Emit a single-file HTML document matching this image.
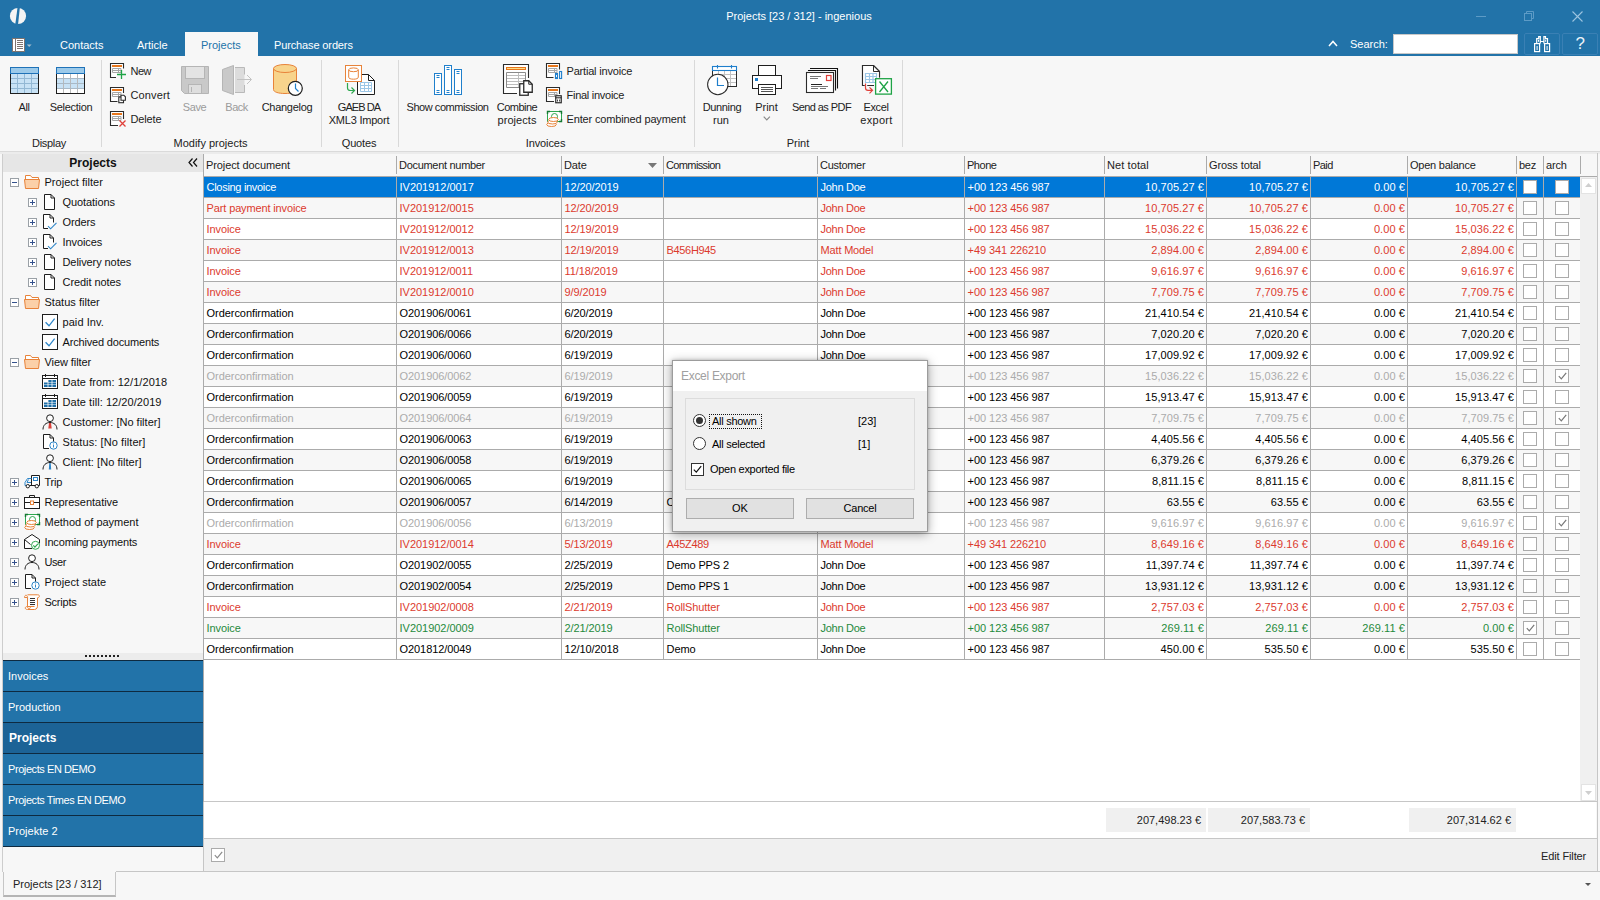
<!DOCTYPE html>
<html><head><meta charset="utf-8"><title>Projects [23 / 312] - ingenious</title>
<style>
*{box-sizing:border-box}
html,body{margin:0;padding:0}
body{width:1600px;height:900px;overflow:hidden;background:#f7f7f7;font-family:"Liberation Sans",sans-serif;font-size:11px;color:#1a1a1a;position:relative;-webkit-font-smoothing:antialiased}
.abs{position:absolute}
.t{position:absolute;white-space:nowrap;line-height:13px;height:13px}
.w{color:#fff}
.c{text-align:center}
svg{position:absolute;overflow:visible}
/* grid */
#grid{position:absolute;left:203px;top:154px;width:1394px;height:648px;background:#fff}
.row{position:absolute;left:1px;width:1376px;height:21px;border-bottom:1px solid #ABABAB}
.row.alt{background:#f7f7f7}
.row.sel{background:#0078D7;color:#fff}
.row.red{color:#DC3A2E}.row.grn{color:#1F8A3C}.row.gry{color:#ABABAB}.row.blk{color:#000}
.cell{position:absolute;top:0;height:20px;line-height:20px;white-space:nowrap;overflow:hidden;padding:0 3px 0 2.6px;letter-spacing:-0.12px}
.cell.r{text-align:right;padding-right:2px;letter-spacing:0.08px}
.vl{position:absolute;width:1px;background:#ABABAB}
.cb{position:absolute;width:14px;height:14px;border:1px solid #ABABAB;background:#fff;top:3px}
.hd{position:absolute;top:0;height:22px;line-height:22px;color:#222;white-space:nowrap;padding-left:2px;letter-spacing:-0.1px}
.sum{position:absolute;top:654px;height:24px;background:#f0f0f0;line-height:24px;text-align:right;padding-right:5px;color:#222}
/* sidebar */
.nav{position:absolute;left:3px;width:200px;height:31px;background:#2273A9;border-top:1px solid #0e2a40;color:#fff;line-height:31px;padding-left:5px}
.tr{position:absolute;white-space:nowrap;line-height:14px;height:14px;color:#111}
.pm{position:absolute;width:9px;height:9px;border:1px solid #9aa0a6;background:#fff}
.pm:before{content:"";position:absolute;left:1px;top:3px;width:5px;height:1px;background:#34518c}
.pm.plus:after{content:"";position:absolute;left:3px;top:1px;width:1px;height:5px;background:#34518c}
/* ribbon */
.rl{position:absolute;white-space:nowrap;line-height:13px;color:#222;font-size:11px}
.rsep{position:absolute;top:60px;height:87px;width:1px;background:#d9d9d9}
.dis{color:#9b9b9b}
</style></head><body>

<div class="abs" style="left:0;top:0;width:1600px;height:56px;background:#2273A9"></div>
<svg style="left:9px;top:7px" width="18" height="18" viewBox="0 0 18 18"><circle cx="9" cy="9" r="8.1" fill="#f4f4f4"/><path d="M8.600 0L10.900 0L9.000 18L6.200 18Z" fill="#2273A9"/></svg>
<div class="t w" style="left:650px;width:298px;text-align:center;top:10px">Projects [23 / 312] - ingenious</div>
<div class="abs" style="left:1476px;top:16px;width:10px;height:1px;background:#5d9bc6"></div>
<svg style="left:1524px;top:11px" width="10" height="10" viewBox="0 0 10 10" fill="none" stroke="#5d9bc6" stroke-width="1"><rect x="0.5" y="2.5" width="7" height="7"/><path d="M2.5 2.5V0.5H9.5V7.5H7.5"/></svg>
<svg style="left:1572px;top:11px" width="11" height="11" viewBox="0 0 11 11" fill="none" stroke="#9cc4e0" stroke-width="1.1"><path d="M0.5 0.5L10.5 10.5M10.5 0.5L0.5 10.5"/></svg>
<svg style="left:12px;top:38px" width="20" height="14" viewBox="0 0 20 14"><rect x="0.5" y="0.5" width="12" height="13" fill="#fff" stroke="#7d7470" stroke-width="1"/><path d="M3.500 1v12" stroke="#7d7470"/><path d="M5 2.500h6M5 4.500h6M5 6.500h6M5 8.500h6M5 10.500h6" stroke="#7d7470" stroke-width="1"/><path d="M14.800 6.500h4.800l-2.400 2.600z" fill="#a9bfce"/></svg>
<div class="abs" style="left:185px;top:32px;width:73px;height:25px;background:#f7f7f7"></div>
<div class="t w" style="left:60px;top:39px">Contacts</div>
<div class="t w" style="left:137px;top:39px">Article</div>
<div class="t" style="left:201px;top:39px;color:#2273A9">Projects</div>
<div class="t w" style="left:274px;top:39px;letter-spacing:-0.13px">Purchase orders</div>
<svg style="left:1328px;top:40px" width="10" height="7" viewBox="0 0 10 7" fill="none" stroke="#fff" stroke-width="1.5"><path d="M1 6L5 1.5L9 6"/></svg>
<div class="t w" style="left:1350px;top:38px">Search:</div>
<div class="abs" style="left:1393px;top:34px;width:125px;height:20px;background:#fff;border:1px solid #c8c8c8"></div>
<div class="abs" style="left:1524px;top:33px;width:36px;height:22px;border:1px solid #3a80b4;border-radius:2px"></div>
<div class="abs" style="left:1562px;top:33px;width:36px;height:22px;border:1px solid #3a80b4;border-radius:2px"></div>
<svg style="left:1534px;top:36px" width="17" height="16" viewBox="0 0 17 16" fill="none" stroke="#fff" stroke-width="1.2"><rect x="0.600" y="7.600" width="5" height="8"/><rect x="10.600" y="7.600" width="5" height="8"/><path d="M2.700 7.600V2.600H4.700V0.600H6.300V7.600M13.500 7.600V2.600H11.500V0.600H9.900V7.600M6.300 5.500h3.600"/><path d="M3.100 10v4M13.100 10v4M4.500 3.800v2M11.700 3.800v2" stroke-width="1"/></svg>
<div class="t" style="left:1575.5px;top:35px;font-size:17px;line-height:18px;height:18px;color:#eaf2f8">?</div>
<div class="abs" style="left:0;top:56px;width:1600px;height:95px;background:#f7f7f7"></div>
<div class="abs" style="left:0;top:151px;width:1600px;height:1px;background:#dadada"></div>
<div class="abs" style="left:0;top:152px;width:1600px;height:2px;background:#ececec"></div>
<div class="rsep" style="left:101px"></div>
<div class="rsep" style="left:321px"></div>
<div class="rsep" style="left:398px"></div>
<div class="rsep" style="left:694px"></div>
<div class="rsep" style="left:902px"></div>
<svg style="left:10px;top:67px" width="29" height="27" viewBox="0 0 29 27" fill="none" stroke-width="1"><rect x="0.5" y="6.5" width="28" height="20" fill="#C8E2F5" stroke="none"/><path d="M7.5 7v19.5M14.5 7v19.5M21.5 7v19.5" stroke="#93B8D4"/><path d="M1 11.5h27M1 16.5h27M1 21.5h27" stroke="#93B8D4"/><rect x="0.5" y="0.5" width="28" height="26" stroke="#1e1e1e"/><rect x="0.5" y="0.5" width="28" height="6" fill="#9CCAEA" stroke="#1F72B8"/></svg>
<svg style="left:56px;top:67px" width="29" height="27" viewBox="0 0 29 27" fill="none" stroke-width="1"><rect x="0.5" y="6.5" width="28" height="20" fill="#fff" stroke="none"/><rect x="1" y="11.5" width="27" height="10" fill="#C8E2F5"/><path d="M7.5 7v19.5M14.5 7v19.5M21.5 7v19.5" stroke="#b9b9b9"/><path d="M1 11.5h27M1 16.5h27M1 21.5h27" stroke="#a9b9c6"/><rect x="0.5" y="0.5" width="28" height="26" stroke="#1e1e1e"/><rect x="0.5" y="0.5" width="28" height="6" fill="#9CCAEA" stroke="#1F72B8"/></svg>
<div class="rl " style="left:-36px;width:120px;text-align:center;top:101px;letter-spacing:-0.411px">All</div>
<div class="rl " style="left:11px;width:120px;text-align:center;top:101px;letter-spacing:-0.285px">Selection</div>
<div class="rl " style="left:-11px;width:120px;text-align:center;top:137px;letter-spacing:-0.325px">Display</div>
<svg style="left:110px;top:63px" width="17" height="17" viewBox="0 0 17 17" fill="none" stroke-width="1"><path d="M13.5 5.5V0.5H0.5v14H6" fill="#fff" stroke="#2b2b2b" stroke-width="1.1"/><path d="M2 3h10" stroke="#E8771C" stroke-width="2"/><path d="M2.5 5.5h8.5v4h-8.5zM2.5 7.5h8.5M8.5 5.5v4" stroke="#a6a6a6"/><path d="M11.5 7v9M7 11.5h9" stroke="#1FA346" stroke-width="1.3"/></svg>
<svg style="left:110px;top:87px" width="17" height="17" viewBox="0 0 17 17" fill="none" stroke-width="1"><path d="M13.5 6V0.5H0.5v14H7.5" fill="#fff" stroke="#2b2b2b" stroke-width="1.1"/><path d="M2 3h10" stroke="#E8771C" stroke-width="2"/><path d="M2.5 5.5h8.5v4h-8.5zM2.5 7.5h8.5M8.5 5.5v4" stroke="#a6a6a6"/><rect x="8.800" y="10" width="4.700" height="5.700" fill="#fff" stroke="#2b2b2b" stroke-width="1.100"/><path d="M11 8.200h2.800l1.600 1.600v3.400h-4.400z" fill="#fff" stroke="#2b2b2b" stroke-width="1.100"/></svg>
<svg style="left:110px;top:111px" width="17" height="17" viewBox="0 0 17 17" fill="none" stroke-width="1"><path d="M13.5 8V0.5H0.5v14H8" fill="#fff" stroke="#2b2b2b" stroke-width="1.1"/><path d="M2 3h10" stroke="#E8771C" stroke-width="2"/><path d="M2.5 5.5h8.5v4h-8.5zM2.5 7.5h8.5M8.5 5.5v4" stroke="#a6a6a6"/><path d="M9.5 9.500l6 6M15.500 9.500l-6 6" stroke="#E0403A" stroke-width="1.3"/></svg>
<div class="rl " style="left:130.5px;top:65px;letter-spacing:-0.505px">New</div>
<div class="rl " style="left:130.5px;top:89px;letter-spacing:0.124px">Convert</div>
<div class="rl " style="left:130.5px;top:113px;letter-spacing:-0.149px">Delete</div>
<svg style="left:181px;top:66px" width="28" height="28" viewBox="0 0 28 28" fill="none" stroke-width="1"><path d="M0.5 0.5h27v27H3.5l-3-3z" fill="#c9c9c9" stroke="#b5b5b5"/><rect x="4.5" y="0.5" width="19" height="12" fill="#e3e3e3" stroke="#b5b5b5"/><rect x="7.5" y="18.5" width="13" height="9" fill="#dedede" stroke="#b5b5b5"/><path d="M10.5 21v5" stroke="#b5b5b5"/></svg>
<div class="rl dis" style="left:134.5px;width:120px;text-align:center;top:101px;letter-spacing:-0.42px">Save</div>
<svg style="left:222px;top:65px" width="31" height="30" viewBox="0 0 31 30" fill="none" stroke-width="1"><rect x="13" y="3" width="9.500" height="24.500" fill="#dcdcdc"/><path d="M13 2.500h9.500v7M22.500 20v7.500h-9.500" stroke="#b9b9b9"/><path d="M0.500 4.500L11.500 0.500v29L0.500 25.500z" fill="#c9c9c9" stroke="#b5b5b5"/><path d="M15 14.500h14M25 10l4.500 4.500l-4.500 4.500" stroke="#c2c2c2"/></svg>
<div class="rl dis" style="left:176.5px;width:120px;text-align:center;top:101px;letter-spacing:-0.542px">Back</div>
<svg style="left:273px;top:64px" width="32" height="32" viewBox="0 0 32 32" fill="none" stroke-width="1"><path d="M0.5 4.5v21c0 2.5 5 4 11.5 4s11.5-1.5 11.5-4v-21" fill="#F8D48C" stroke="#E8833A"/><ellipse cx="12" cy="4.5" rx="11.5" ry="4" fill="#F8D48C" stroke="#E8833A"/><circle cx="22.3" cy="24.3" r="7" fill="#fff" stroke="#1e1e1e" stroke-width="1.2"/><path d="M22.5 19.5v5l3 3" stroke="#2080CC" stroke-width="1.2"/></svg>
<div class="rl " style="left:227px;width:120px;text-align:center;top:101px;letter-spacing:-0.291px">Changelog</div>
<div class="rl " style="left:150.5px;width:120px;text-align:center;top:137px;letter-spacing:0.001px">Modify projects</div>
<svg style="left:345px;top:65px" width="31" height="31" viewBox="0 0 31 31" fill="none" stroke-width="1"><path d="M12.5 9.5h11l6 6v14h-17z" fill="#fff" stroke="#1e1e1e"/><path d="M23.5 9.5v6h6" stroke="#1e1e1e"/><path d="M15.500 17.500h11v9h-11zM15.500 20.500h11M15.500 23.500h11M19.500 17.500v9M23.500 17.500v9" stroke="#9CC6E6"/><rect x="0.5" y="0.500" width="16" height="16" fill="#fff" stroke="#E8833A"/><path d="M3.700 4.800v7.500c0 1.200 2.200 1.900 4.800 1.900s4.800-0.700 4.800-1.900V4.800" stroke="#E8833A"/><ellipse cx="8.500" cy="4.800" rx="4.800" ry="1.900" stroke="#E8833A"/><path d="M2.500 18v5c0 2 1 2.500 3 2.500h3.500M6.500 22.500l3 3l-3 3" stroke="#2EA84F" stroke-width="1.200"/></svg>
<div class="rl " style="left:299px;width:120px;text-align:center;top:101px;letter-spacing:-0.944px">GAEB DA</div>
<div class="rl " style="left:299px;width:120px;text-align:center;top:114px;letter-spacing:-0.224px">XML3 Import</div>
<div class="rl " style="left:299px;width:120px;text-align:center;top:137px;letter-spacing:-0.161px">Quotes</div>
<svg style="left:434px;top:65px" width="29" height="30" viewBox="0 0 29 30" fill="none" stroke-width="1"><rect x="0.5" y="8.5" width="7" height="21" fill="#fff" stroke="#2080CC"/><path d="M2.5 10.5h3M2.5 12.5h3M2.5 25.5h3M2.5 27.5h3" stroke="#2080CC"/><rect x="10.5" y="0.5" width="7" height="29" fill="#fff" stroke="#2080CC"/><path d="M12.5 2.5h3M12.5 4.5h3M12.5 25.5h3M12.5 27.5h3" stroke="#2080CC"/><rect x="20.5" y="4.5" width="7" height="25" fill="#fff" stroke="#2080CC"/><path d="M22.5 6.5h3M22.5 8.5h3M22.5 25.5h3M22.5 27.5h3" stroke="#2080CC"/></svg>
<div class="rl " style="left:387.5px;width:120px;text-align:center;top:101px;letter-spacing:-0.443px">Show commission</div>
<svg style="left:503px;top:64px" width="31" height="33" viewBox="0 0 31 33" fill="none" stroke-width="1"><path d="M25.500 14V0.500H0.500v29H14" fill="#fff" stroke="#2b2b2b" stroke-width="1.1"/><rect x="3.500" y="3.500" width="19" height="2" fill="#FBE08A" stroke="#E8751A"/><path d="M3.500 8.500h19v15h-19z" stroke="#8a8a8a"/><path d="M4 11.500h18M4 14.500h18M4 17.500h18M4 20.500h18M15.500 9v14" stroke="#bdbdbd"/><rect x="16.750" y="19.750" width="8.500" height="11.500" fill="#fff" stroke="#2b2b2b" stroke-width="1.300"/><path d="M20.750 16.750h5l3.500 3.500v8h-8.500z" fill="#fff" stroke="#2b2b2b" stroke-width="1.300"/><path d="M25.750 16.750v3.500h3.500" stroke="#2b2b2b"/></svg>
<div class="rl " style="left:457px;width:120px;text-align:center;top:101px;letter-spacing:-0.519px">Combine</div>
<div class="rl " style="left:457px;width:120px;text-align:center;top:114px;letter-spacing:0.046px">projects</div>
<svg style="left:546px;top:63px" width="17" height="17" viewBox="0 0 17 17" fill="none" stroke-width="1"><path d="M13.5 6.5V0.5H0.5v14H7.5" fill="#fff" stroke="#2b2b2b" stroke-width="1.1"/><path d="M2 3h10" stroke="#E8771C" stroke-width="2"/><path d="M2.5 5.5h8.5v4h-8.5zM2.5 7.5h8.5M8.5 5.5v4" stroke="#a6a6a6"/><rect x="9.500" y="10.500" width="2" height="5" fill="#fff" stroke="#1F7FCC" stroke-width="1.100"/><rect x="13.600" y="8.500" width="2" height="7" fill="#fff" stroke="#1F7FCC" stroke-width="1.100"/></svg>
<svg style="left:546px;top:87px" width="17" height="17" viewBox="0 0 17 17" fill="none" stroke-width="1"><path d="M13.5 7V0.5H0.5v14H8" fill="#fff" stroke="#2b2b2b" stroke-width="1.1"/><path d="M2 3h10" stroke="#E8771C" stroke-width="2"/><path d="M2.5 5.5h8.5v4h-8.5zM2.5 7.5h8.5M8.5 5.5v4" stroke="#a6a6a6"/><rect x="9.750" y="8.750" width="5.500" height="7" fill="#fff" stroke="#2b2b2b" stroke-width="1.200"/><path d="M9.500 10.800h6" stroke="#2b2b2b" stroke-width="1.100"/><path d="M11.500 12.500v2M13.600 12.500v2" stroke="#2b2b2b" stroke-width="0.9"/></svg>
<svg style="left:546px;top:111px" width="17" height="17" viewBox="0 0 17 17" fill="none" stroke-width="1"><rect x="1.5" y="0.5" width="14" height="10" fill="#fff" stroke="#2EA84F"/><path d="M1.500 3V0.500H4M13 0.500h2.500V3M15.500 8v2.500H13" stroke="#157a33" stroke-width="1.400"/><circle cx="8.500" cy="5.500" r="3" stroke="#2EA84F"/><ellipse cx="5.500" cy="13.500" rx="4.800" ry="2" fill="#fff" stroke="#E8833A"/><ellipse cx="6.500" cy="11" rx="4.800" ry="2" fill="#fff" stroke="#E8833A"/><ellipse cx="7.500" cy="8.500" rx="4.800" ry="2" fill="#fff" stroke="#E8833A"/></svg>
<div class="rl " style="left:566.5px;top:65px;letter-spacing:-0.186px">Partial invoice</div>
<div class="rl " style="left:566.5px;top:89px;letter-spacing:-0.265px">Final invoice</div>
<div class="rl " style="left:566.5px;top:113px;letter-spacing:-0.145px">Enter combined payment</div>
<div class="rl " style="left:485.5px;width:120px;text-align:center;top:137px;letter-spacing:-0.095px">Invoices</div>
<svg style="left:707px;top:65px" width="32" height="31" viewBox="0 0 32 31" fill="none" stroke-width="1"><rect x="5.500" y="1.500" width="24" height="20" fill="#fff" stroke="#2b2b2b"/><path d="M13 9.500h16M13 13.500h16M13 17.500h16M11.500 6v15M17.500 6v15M23.500 6v15" stroke="#c2c2c2"/><rect x="5.500" y="1.500" width="24" height="4" fill="#fff" stroke="#1F7FCC" stroke-width="1.100"/><path d="M10.500 0v3.500M24.500 0v3.500" stroke="#1F7FCC" stroke-width="1.100"/><circle cx="10.800" cy="19.500" r="10.200" fill="#fff" stroke="#2b2b2b" stroke-width="1.050"/><path d="M10.500 12.500v8h6.500" stroke="#1F7FCC" stroke-width="1.200"/></svg>
<div class="rl " style="left:662px;width:120px;text-align:center;top:101px;letter-spacing:-0.369px">Dunning</div>
<div class="rl " style="left:661px;width:120px;text-align:center;top:114px;letter-spacing:0.065px">run</div>
<svg style="left:752px;top:65px" width="31" height="31" viewBox="0 0 31 31" fill="none" stroke-width="1"><rect x="6.500" y="0.500" width="17" height="11" fill="#fff" stroke="#1e1e1e"/><rect x="0.500" y="10.500" width="29" height="13" fill="#fff" stroke="#1e1e1e"/><rect x="3" y="13" width="3" height="3" fill="#1F7FCC"/><rect x="6.500" y="19.500" width="17" height="10" fill="#fff" stroke="#1e1e1e"/><path d="M9 22.500h12M9 24.500h12M9 26.500h12" stroke="#555"/></svg>
<div class="rl " style="left:706.5px;width:120px;text-align:center;top:101px;letter-spacing:-0.065px">Print</div>
<svg style="left:763px;top:116px" width="8" height="5" viewBox="0 0 8 5" fill="none" stroke-width="1"><path d="M0.700 0.700l3.100 3.100l3.100-3.100" stroke="#8a8a8a" stroke-width="1.200"/></svg>
<svg style="left:806px;top:67px" width="33" height="27" viewBox="0 0 33 27" fill="none" stroke-width="1"><path d="M4 1.500H31.500V21.500" stroke="#111" stroke-width="1.100"/><path d="M2 3.500H29.500V23.500" stroke="#111" stroke-width="1.100"/><rect x="0.500" y="5.500" width="27" height="20" fill="#fff" stroke="#2b2b2b" stroke-width="1.100"/><rect x="20.500" y="8.500" width="4.500" height="5" stroke="#E0403A" stroke-width="1.200"/><path d="M4 9.500h11M4 11.500h8" stroke="#777"/><path d="M5 17.500h11" stroke="#222"/><path d="M5 19.500h17M5 21.500h7M14 21.500h6" stroke="#777"/></svg>
<div class="rl " style="left:761.5px;width:120px;text-align:center;top:101px;letter-spacing:-0.566px">Send as PDF</div>
<svg style="left:862px;top:65px" width="31" height="31" viewBox="0 0 31 31" fill="none" stroke-width="1"><path d="M2.500 20.500H0.500V0.500H11.500L17.500 6.500V12.500M5.500 20.500H12" fill="none" stroke="#2b2b2b" stroke-width="1.100"/><path d="M0.500 20V0.500H11.500L17.500 6.500V20z" fill="#fff" stroke="none"/><path d="M2.500 20.500H0.500V0.500H11.500L17.500 6.500V12.500M5.500 20.500H12" stroke="#2b2b2b" stroke-width="1.100"/><path d="M11.500 0.500V6.500H17.500" stroke="#2b2b2b"/><path d="M3.500 8.500h11v9h-11zM3.500 11.500h11M3.500 14.500h11M7.500 8.500v9M11 8.500v9" stroke="#9CC6E6" stroke-width="1.200"/><rect x="13.600" y="13.700" width="15.800" height="15.400" fill="#fff" stroke="#1FA346" stroke-width="1.300"/><path d="M17.500 16.500L26 27M26 16.500L17.500 27" stroke="#1FA346" stroke-width="1.300"/><path d="M3.500 18.500v4.500c0 1.600 0.800 2.300 2.500 2.300h4.500M7.500 22.300l3 3l-3 3" stroke="#E0403A" stroke-width="1.200"/></svg>
<div class="rl " style="left:816px;width:120px;text-align:center;top:101px;letter-spacing:-0.341px">Excel</div>
<div class="rl " style="left:816.5px;width:120px;text-align:center;top:114px;letter-spacing:0.304px">export</div>
<div class="rl " style="left:738px;width:120px;text-align:center;top:137px;letter-spacing:-0.065px">Print</div>
<div class="abs" style="left:0;top:154px;width:203px;height:718px;background:#f7f7f7"></div>
<div class="abs" style="left:2px;top:154px;width:1px;height:718px;background:#cdcdcd"></div>
<div class="abs" style="left:3px;top:154px;width:200px;height:18px;background:#e6e6e6"></div>
<div class="t" style="left:3px;width:180px;text-align:center;top:157px;font-weight:bold;font-size:12px;color:#111">Projects</div>
<svg style="left:188px;top:158px" width="10" height="9" viewBox="0 0 10 9" fill="none" stroke="#111" stroke-width="1.2"><path d="M4.5 0.5L1 4.5L4.5 8.5M9 0.5L5.5 4.5L9 8.5"/></svg>
<div class="pm" style="left:10px;top:178px"></div>
<svg style="left:24px;top:174px" width="16" height="16" viewBox="0 0 16 16" fill="none" stroke-width="1"><path d="M1.5 6V1.5h5l1.5 2h6.5V6" fill="#fff" stroke="#E8833A"/><path d="M0.5 5.5h15l-1 9h-13z" fill="#FBD0A8" stroke="#E8833A"/></svg>
<div class="tr" style="left:44.5px;top:175px;letter-spacing:0.023px">Project filter</div>
<div class="pm plus" style="left:28px;top:198px"></div>
<svg style="left:42px;top:194px" width="16" height="16" viewBox="0 0 16 16" fill="none" stroke-width="1"><path d="M2.5 0.5h6.5l3.5 3.5v11.5h-10z" fill="#fff" stroke="#1e1e1e"/><path d="M9 0.5v3.5h3.5" stroke="#1e1e1e"/></svg>
<div class="tr" style="left:62.5px;top:195px;letter-spacing:-0.07px">Quotations</div>
<div class="pm plus" style="left:28px;top:218px"></div>
<svg style="left:42px;top:214px" width="16" height="16" viewBox="0 0 16 16" fill="none" stroke-width="1"><path d="M6 14.5H1.5v-14h6.5l3.5 3.5v4.5" fill="#fff" stroke="#1e1e1e"/><path d="M8 0.5v3.5h3.5" stroke="#1e1e1e"/><path d="M6 12.2l2.6 2.6L14.5 8.8" stroke="#2E86C9" stroke-width="1.1"/></svg>
<div class="tr" style="left:62.5px;top:215px;letter-spacing:-0.138px">Orders</div>
<div class="pm plus" style="left:28px;top:238px"></div>
<svg style="left:42px;top:234px" width="16" height="16" viewBox="0 0 16 16" fill="none" stroke-width="1"><path d="M6 14.5H1.5v-14h6.5l3.5 3.5v4.5" fill="#fff" stroke="#1e1e1e"/><path d="M8 0.5v3.5h3.5" stroke="#1e1e1e"/><path d="M6 12.2l2.6 2.6L14.5 8.8" stroke="#2E86C9" stroke-width="1.1"/></svg>
<div class="tr" style="left:62.5px;top:235px;letter-spacing:-0.095px">Invoices</div>
<div class="pm plus" style="left:28px;top:258px"></div>
<svg style="left:42px;top:254px" width="16" height="16" viewBox="0 0 16 16" fill="none" stroke-width="1"><path d="M2.5 0.5h6.5l3.5 3.5v11.5h-10z" fill="#fff" stroke="#1e1e1e"/><path d="M9 0.5v3.5h3.5" stroke="#1e1e1e"/></svg>
<div class="tr" style="left:62.5px;top:255px;letter-spacing:-0.079px">Delivery notes</div>
<div class="pm plus" style="left:28px;top:278px"></div>
<svg style="left:42px;top:274px" width="16" height="16" viewBox="0 0 16 16" fill="none" stroke-width="1"><path d="M2.5 0.5h6.5l3.5 3.5v11.5h-10z" fill="#fff" stroke="#1e1e1e"/><path d="M9 0.5v3.5h3.5" stroke="#1e1e1e"/></svg>
<div class="tr" style="left:62.5px;top:275px;letter-spacing:-0.068px">Credit notes</div>
<div class="pm" style="left:10px;top:298px"></div>
<svg style="left:24px;top:294px" width="16" height="16" viewBox="0 0 16 16" fill="none" stroke-width="1"><path d="M1.5 6V1.5h5l1.5 2h6.5V6" fill="#fff" stroke="#E8833A"/><path d="M0.5 5.5h15l-1 9h-13z" fill="#FBD0A8" stroke="#E8833A"/></svg>
<div class="tr" style="left:44.5px;top:295px;letter-spacing:0.021px">Status filter</div>
<svg style="left:42px;top:314px" width="16" height="16" viewBox="0 0 16 16" fill="none" stroke-width="1"><rect x="0.5" y="0.5" width="15" height="15" fill="#fff" stroke="#1e1e1e"/><path d="M3.6 8.2l3.4 3.6L12.6 4.6" stroke="#2E86C9" stroke-width="1.3"/></svg>
<div class="tr" style="left:62.5px;top:315px;letter-spacing:0.069px">paid Inv.</div>
<svg style="left:42px;top:334px" width="16" height="16" viewBox="0 0 16 16" fill="none" stroke-width="1"><rect x="0.5" y="0.5" width="15" height="15" fill="#fff" stroke="#1e1e1e"/><path d="M3.6 8.2l3.4 3.6L12.6 4.6" stroke="#2E86C9" stroke-width="1.3"/></svg>
<div class="tr" style="left:62.5px;top:335px;letter-spacing:-0.165px">Archived documents</div>
<div class="pm" style="left:10px;top:358px"></div>
<svg style="left:24px;top:354px" width="16" height="16" viewBox="0 0 16 16" fill="none" stroke-width="1"><path d="M1.5 6V1.5h5l1.5 2h6.5V6" fill="#fff" stroke="#E8833A"/><path d="M0.5 5.5h15l-1 9h-13z" fill="#FBD0A8" stroke="#E8833A"/></svg>
<div class="tr" style="left:44.5px;top:355px;letter-spacing:-0.08px">View filter</div>
<svg style="left:42px;top:374px" width="16" height="16" viewBox="0 0 16 16" fill="none" stroke-width="1"><rect x="0.5" y="1.5" width="15" height="13" fill="#fff" stroke="#1e1e1e"/><path d="M0.5 4.5h15M3.5 0v3M12.5 0v3" stroke="#1e1e1e"/><path d="M6 6h8v2h-8zM2 8.5h12v2h-12zM2 11h12v2h-12z" fill="#1F6FA8"/><path d="M6 6v7M10 6v7" stroke="#fff" stroke-width="0.8"/></svg>
<div class="tr" style="left:62.5px;top:375px;letter-spacing:0.068px">Date from: 12/1/2018</div>
<svg style="left:42px;top:394px" width="16" height="16" viewBox="0 0 16 16" fill="none" stroke-width="1"><rect x="0.5" y="1.5" width="15" height="13" fill="#fff" stroke="#1e1e1e"/><path d="M0.5 4.5h15M3.5 0v3M12.5 0v3" stroke="#1e1e1e"/><path d="M6 6h8v2h-8zM2 8.5h12v2h-12zM2 11h12v2h-12z" fill="#1F6FA8"/><path d="M6 6v7M10 6v7" stroke="#fff" stroke-width="0.8"/></svg>
<div class="tr" style="left:62.5px;top:395px;letter-spacing:0.054px">Date till: 12/20/2019</div>
<svg style="left:42px;top:414px" width="16" height="16" viewBox="0 0 16 16" fill="none" stroke-width="1"><circle cx="8" cy="4.2" r="3.4" fill="#fff" stroke="#1e1e1e"/><path d="M1 15.5c0-4.5 3-7 7-7s7 2.5 7 7" stroke="#1e1e1e"/><path d="M7 9h2l0.7 5.5h-3.4z" fill="#D9433B"/></svg>
<div class="tr" style="left:62.5px;top:415px;letter-spacing:0.009px">Customer: [No filter]</div>
<svg style="left:42px;top:434px" width="16" height="16" viewBox="0 0 16 16" fill="none" stroke-width="1"><path d="M7 14.5H1.5v-14h6.5l3.5 3.5v4" fill="#fff" stroke="#1e1e1e"/><path d="M8 0.5v3.5h3.5" stroke="#1e1e1e"/><circle cx="11.5" cy="11.5" r="3.7" fill="#fff" stroke="#2E86C9"/><path d="M11.5 10.5v3" stroke="#2E86C9"/><circle cx="11.5" cy="9" r="0.6" fill="#2E86C9"/></svg>
<div class="tr" style="left:62.5px;top:435px;letter-spacing:0.089px">Status: [No filter]</div>
<svg style="left:42px;top:454px" width="16" height="16" viewBox="0 0 16 16" fill="none" stroke-width="1"><circle cx="8" cy="4.2" r="3.4" fill="#fff" stroke="#1e1e1e"/><path d="M1 15.5c0-4.5 3-7 7-7s7 2.5 7 7" stroke="#1e1e1e"/><path d="M7.3 9h1.4l0.5 6.5h-2.4z" fill="#2E86C9"/></svg>
<div class="tr" style="left:62.5px;top:455px;letter-spacing:0.039px">Client: [No filter]</div>
<div class="pm plus" style="left:10px;top:478px"></div>
<svg style="left:24px;top:474px" width="16" height="16" viewBox="0 0 16 16" fill="none" stroke-width="1"><path d="M7.5 11.5V1.5h8v10h-1.5" fill="#fff" stroke="#1e1e1e"/><rect x="9.5" y="3.5" width="4" height="3" stroke="#2E86C9"/><path d="M5.5 11.500h6" stroke="#1e1e1e"/><path d="M7.500 4.500h-4l-2.500 4v3h1.500" stroke="#2E86C9"/><path d="M4.500 5.500l-1.500 3h4" stroke="#2E86C9"/><circle cx="3.8" cy="12.2" r="1.7" fill="#fff" stroke="#1e1e1e"/><circle cx="12.8" cy="12.2" r="1.7" fill="#fff" stroke="#1e1e1e"/></svg>
<div class="tr" style="left:44.5px;top:475px;letter-spacing:-0.212px">Trip</div>
<div class="pm plus" style="left:10px;top:498px"></div>
<svg style="left:24px;top:494px" width="16" height="16" viewBox="0 0 16 16" fill="none" stroke-width="1"><rect x="0.5" y="3.5" width="15" height="11" fill="#fff" stroke="#1e1e1e"/><path d="M5.5 3.5v-2h5v2" stroke="#1e1e1e"/><path d="M0.5 8.5h15" stroke="#1e1e1e"/><rect x="6.5" y="7" width="3" height="3.5" fill="#fff" stroke="#E8833A"/></svg>
<div class="tr" style="left:44.5px;top:495px;letter-spacing:-0.021px">Representative</div>
<div class="pm plus" style="left:10px;top:518px"></div>
<svg style="left:24px;top:514px" width="16" height="16" viewBox="0 0 16 16" fill="none" stroke-width="1"><rect x="1.5" y="0.5" width="14" height="10" fill="#fff" stroke="#2EA84F"/><path d="M1.5 3V0.5H4M13 0.5h2.5V3M15.5 8v2.5H13" stroke="#157a33" stroke-width="1.4"/><circle cx="8.5" cy="5.5" r="3" stroke="#2EA84F"/><ellipse cx="5.5" cy="13.5" rx="4.8" ry="2" fill="#fff" stroke="#E8833A"/><ellipse cx="6.5" cy="11" rx="4.8" ry="2" fill="#fff" stroke="#E8833A"/><ellipse cx="7.5" cy="8.5" rx="4.8" ry="2" fill="#fff" stroke="#E8833A"/></svg>
<div class="tr" style="left:44.5px;top:515px;letter-spacing:-0.01px">Method of payment</div>
<div class="pm plus" style="left:10px;top:538px"></div>
<svg style="left:24px;top:534px" width="16" height="16" viewBox="0 0 16 16" fill="none" stroke-width="1"><path d="M0.5 14.5v-9L8 0.5l7.5 5v4" stroke="#1e1e1e" fill="#fff"/><path d="M0.5 14.5H8M0.5 5.5l6 5" stroke="#1e1e1e"/><circle cx="11.5" cy="11.3" r="4" fill="#fff" stroke="#2EA84F"/><path d="M9.3 11.4l1.6 1.7l3-3.3" stroke="#2EA84F" stroke-width="1.2"/></svg>
<div class="tr" style="left:44.5px;top:535px;letter-spacing:-0.158px">Incoming payments</div>
<div class="pm plus" style="left:10px;top:558px"></div>
<svg style="left:24px;top:554px" width="16" height="16" viewBox="0 0 16 16" fill="none" stroke-width="1"><circle cx="8" cy="4.2" r="3.4" fill="#fff" stroke="#1e1e1e"/><path d="M1 15.5c0-4.5 3-7 7-7s7 2.5 7 7" stroke="#1e1e1e"/></svg>
<div class="tr" style="left:44.5px;top:555px;letter-spacing:-0.459px">User</div>
<div class="pm plus" style="left:10px;top:578px"></div>
<svg style="left:24px;top:574px" width="16" height="16" viewBox="0 0 16 16" fill="none" stroke-width="1"><path d="M7 14.5H1.5v-14h6.5l3.5 3.5v4" fill="#fff" stroke="#1e1e1e"/><path d="M8 0.5v3.5h3.5" stroke="#1e1e1e"/><circle cx="11.5" cy="11.5" r="3.7" fill="#fff" stroke="#2E86C9"/><path d="M11.5 10.5v3" stroke="#2E86C9"/><circle cx="11.5" cy="9" r="0.6" fill="#2E86C9"/></svg>
<div class="tr" style="left:44.5px;top:575px;letter-spacing:0.043px">Project state</div>
<div class="pm plus" style="left:10px;top:598px"></div>
<svg style="left:24px;top:594px" width="16" height="16" viewBox="0 0 16 16" fill="none" stroke-width="1"><path d="M3.5 3.5c0-3 -3-3-3 0h3v9c0 3 3 3 3 0M3.5 0.8h10c3 0 2 3 0 3v8.5c0 3-3 3.2-3 3.2h-7c-3 0-3-3 0-3h7" fill="#fff" stroke="#E8833A"/><path d="M6 4.5h5M6 6.5h5M6 8.5h5M6 10.5h5" stroke="#333"/></svg>
<div class="tr" style="left:44.5px;top:595px;letter-spacing:-0.232px">Scripts</div>
<div class="abs" style="left:3px;top:653px;width:200px;height:7px;background:#ececec"></div>
<div class="abs" style="left:85px;top:655px;width:34px;height:2px;background:repeating-linear-gradient(90deg,#222 0 2px,transparent 2px 4px)"></div>
<div class="nav" style="top:660px">Invoices</div>
<div class="nav" style="top:691px">Production</div>
<div class="nav" style="top:722px;background:#1C6396;font-weight:bold;font-size:12px;padding-left:6px">Projects</div>
<div class="nav" style="top:753px;letter-spacing:-0.42px">Projects EN DEMO</div>
<div class="nav" style="top:784px;letter-spacing:-0.42px">Projects Times EN DEMO</div>
<div class="nav" style="top:815px">Projekte 2</div>
<div class="abs" style="left:3px;top:846px;width:200px;height:1px;background:#0e2a40"></div>
<div id="grid">
<div class="abs" style="left:0;top:0;width:1394px;height:22px;background:#f7f7f7"></div>
<div class="abs" style="left:0;top:22px;width:1394px;height:1px;background:#ABABAB"></div>
<div class="hd" style="left:1px;letter-spacing:-0.101px">Project document</div>
<div class="hd" style="left:194px;letter-spacing:-0.3px">Document number</div>
<div class="hd" style="left:359px;letter-spacing:-0.162px">Date</div>
<div class="hd" style="left:461px;letter-spacing:-0.622px">Commission</div>
<div class="hd" style="left:615px;letter-spacing:-0.298px">Customer</div>
<div class="hd" style="left:762px;letter-spacing:-0.463px">Phone</div>
<div class="hd" style="left:902px;letter-spacing:0.103px">Net total</div>
<div class="hd" style="left:1004px;letter-spacing:-0.117px">Gross total</div>
<div class="hd" style="left:1108px;letter-spacing:-0.583px">Paid</div>
<div class="hd" style="left:1205px;letter-spacing:-0.242px">Open balance</div>
<div class="hd" style="left:1314px;letter-spacing:-0.283px">bez</div>
<div class="hd" style="left:1341px;letter-spacing:-0.202px">arch</div>
<div class="vl" style="left:193px;top:2px;height:18px"></div>
<div class="vl" style="left:358px;top:2px;height:18px"></div>
<div class="vl" style="left:460px;top:2px;height:18px"></div>
<div class="vl" style="left:614px;top:2px;height:18px"></div>
<div class="vl" style="left:761px;top:2px;height:18px"></div>
<div class="vl" style="left:901px;top:2px;height:18px"></div>
<div class="vl" style="left:1003px;top:2px;height:18px"></div>
<div class="vl" style="left:1107px;top:2px;height:18px"></div>
<div class="vl" style="left:1204px;top:2px;height:18px"></div>
<div class="vl" style="left:1313px;top:2px;height:18px"></div>
<div class="vl" style="left:1340px;top:2px;height:18px"></div>
<div class="vl" style="left:1377px;top:2px;height:18px"></div>
<svg style="left:445px;top:9px" width="9" height="5" viewBox="0 0 9 5"><path d="M0 0h9L4.5 5z" fill="#777"/></svg>
<div class="row sel" style="top:23px">
<div class="cell" style="left:0px;width:192px;letter-spacing:-0.306px">Closing invoice</div>
<div class="cell" style="left:193px;width:164px;letter-spacing:-0.034px">IV201912/0017</div>
<div class="cell" style="left:358px;width:101px;letter-spacing:-0.106px">12/20/2019</div>
<div class="cell" style="left:614px;width:146px;letter-spacing:-0.299px">John Doe</div>
<div class="cell" style="left:761px;width:139px;letter-spacing:-0.053px">+00 123 456 987</div>
<div class="cell r" style="left:901px;width:101px">10,705.27 €</div>
<div class="cell r" style="left:1003px;width:103px">10,705.27 €</div>
<div class="cell r" style="left:1107px;width:96px">0.00 €</div>
<div class="cell r" style="left:1204px;width:108px">10,705.27 €</div>
<div class="cb" style="left:1319px"></div>
<div class="cb" style="left:1351px"></div>
</div>
<div class="row red alt" style="top:44px">
<div class="cell" style="left:0px;width:192px;letter-spacing:-0.136px">Part payment invoice</div>
<div class="cell" style="left:193px;width:164px;letter-spacing:-0.034px">IV201912/0015</div>
<div class="cell" style="left:358px;width:101px;letter-spacing:-0.106px">12/20/2019</div>
<div class="cell" style="left:614px;width:146px;letter-spacing:-0.299px">John Doe</div>
<div class="cell" style="left:761px;width:139px;letter-spacing:-0.053px">+00 123 456 987</div>
<div class="cell r" style="left:901px;width:101px">10,705.27 €</div>
<div class="cell r" style="left:1003px;width:103px">10,705.27 €</div>
<div class="cell r" style="left:1107px;width:96px">0.00 €</div>
<div class="cell r" style="left:1204px;width:108px">10,705.27 €</div>
<div class="cb" style="left:1319px"></div>
<div class="cb" style="left:1351px"></div>
</div>
<div class="row red" style="top:65px">
<div class="cell" style="left:0px;width:192px;letter-spacing:-0.094px">Invoice</div>
<div class="cell" style="left:193px;width:164px;letter-spacing:-0.034px">IV201912/0012</div>
<div class="cell" style="left:358px;width:101px;letter-spacing:-0.106px">12/19/2019</div>
<div class="cell" style="left:614px;width:146px;letter-spacing:-0.299px">John Doe</div>
<div class="cell" style="left:761px;width:139px;letter-spacing:-0.053px">+00 123 456 987</div>
<div class="cell r" style="left:901px;width:101px">15,036.22 €</div>
<div class="cell r" style="left:1003px;width:103px">15,036.22 €</div>
<div class="cell r" style="left:1107px;width:96px">0.00 €</div>
<div class="cell r" style="left:1204px;width:108px">15,036.22 €</div>
<div class="cb" style="left:1319px"></div>
<div class="cb" style="left:1351px"></div>
</div>
<div class="row red alt" style="top:86px">
<div class="cell" style="left:0px;width:192px;letter-spacing:-0.094px">Invoice</div>
<div class="cell" style="left:193px;width:164px;letter-spacing:-0.034px">IV201912/0013</div>
<div class="cell" style="left:358px;width:101px;letter-spacing:-0.106px">12/19/2019</div>
<div class="cell" style="left:460px;width:153px;letter-spacing:-0.35px">B456H945</div>
<div class="cell" style="left:614px;width:146px;letter-spacing:-0.182px">Matt Model</div>
<div class="cell" style="left:761px;width:139px;letter-spacing:-0.096px">+49 341 226210</div>
<div class="cell r" style="left:901px;width:101px">2,894.00 €</div>
<div class="cell r" style="left:1003px;width:103px">2,894.00 €</div>
<div class="cell r" style="left:1107px;width:96px">0.00 €</div>
<div class="cell r" style="left:1204px;width:108px">2,894.00 €</div>
<div class="cb" style="left:1319px"></div>
<div class="cb" style="left:1351px"></div>
</div>
<div class="row red" style="top:107px">
<div class="cell" style="left:0px;width:192px;letter-spacing:-0.094px">Invoice</div>
<div class="cell" style="left:193px;width:164px;letter-spacing:-0.034px">IV201912/0011</div>
<div class="cell" style="left:358px;width:101px;letter-spacing:-0.106px">11/18/2019</div>
<div class="cell" style="left:614px;width:146px;letter-spacing:-0.299px">John Doe</div>
<div class="cell" style="left:761px;width:139px;letter-spacing:-0.053px">+00 123 456 987</div>
<div class="cell r" style="left:901px;width:101px">9,616.97 €</div>
<div class="cell r" style="left:1003px;width:103px">9,616.97 €</div>
<div class="cell r" style="left:1107px;width:96px">0.00 €</div>
<div class="cell r" style="left:1204px;width:108px">9,616.97 €</div>
<div class="cb" style="left:1319px"></div>
<div class="cb" style="left:1351px"></div>
</div>
<div class="row red alt" style="top:128px">
<div class="cell" style="left:0px;width:192px;letter-spacing:-0.094px">Invoice</div>
<div class="cell" style="left:193px;width:164px;letter-spacing:-0.034px">IV201912/0010</div>
<div class="cell" style="left:358px;width:101px;letter-spacing:-0.106px">9/9/2019</div>
<div class="cell" style="left:614px;width:146px;letter-spacing:-0.299px">John Doe</div>
<div class="cell" style="left:761px;width:139px;letter-spacing:-0.053px">+00 123 456 987</div>
<div class="cell r" style="left:901px;width:101px">7,709.75 €</div>
<div class="cell r" style="left:1003px;width:103px">7,709.75 €</div>
<div class="cell r" style="left:1107px;width:96px">0.00 €</div>
<div class="cell r" style="left:1204px;width:108px">7,709.75 €</div>
<div class="cb" style="left:1319px"></div>
<div class="cb" style="left:1351px"></div>
</div>
<div class="row blk" style="top:149px">
<div class="cell" style="left:0px;width:192px;letter-spacing:-0.062px">Orderconfirmation</div>
<div class="cell" style="left:193px;width:164px;letter-spacing:-0.091px">O201906/0061</div>
<div class="cell" style="left:358px;width:101px;letter-spacing:-0.106px">6/20/2019</div>
<div class="cell" style="left:614px;width:146px;letter-spacing:-0.299px">John Doe</div>
<div class="cell" style="left:761px;width:139px;letter-spacing:-0.053px">+00 123 456 987</div>
<div class="cell r" style="left:901px;width:101px">21,410.54 €</div>
<div class="cell r" style="left:1003px;width:103px">21,410.54 €</div>
<div class="cell r" style="left:1107px;width:96px">0.00 €</div>
<div class="cell r" style="left:1204px;width:108px">21,410.54 €</div>
<div class="cb" style="left:1319px"></div>
<div class="cb" style="left:1351px"></div>
</div>
<div class="row blk alt" style="top:170px">
<div class="cell" style="left:0px;width:192px;letter-spacing:-0.062px">Orderconfirmation</div>
<div class="cell" style="left:193px;width:164px;letter-spacing:-0.091px">O201906/0066</div>
<div class="cell" style="left:358px;width:101px;letter-spacing:-0.106px">6/20/2019</div>
<div class="cell" style="left:614px;width:146px;letter-spacing:-0.299px">John Doe</div>
<div class="cell" style="left:761px;width:139px;letter-spacing:-0.053px">+00 123 456 987</div>
<div class="cell r" style="left:901px;width:101px">7,020.20 €</div>
<div class="cell r" style="left:1003px;width:103px">7,020.20 €</div>
<div class="cell r" style="left:1107px;width:96px">0.00 €</div>
<div class="cell r" style="left:1204px;width:108px">7,020.20 €</div>
<div class="cb" style="left:1319px"></div>
<div class="cb" style="left:1351px"></div>
</div>
<div class="row blk" style="top:191px">
<div class="cell" style="left:0px;width:192px;letter-spacing:-0.062px">Orderconfirmation</div>
<div class="cell" style="left:193px;width:164px;letter-spacing:-0.091px">O201906/0060</div>
<div class="cell" style="left:358px;width:101px;letter-spacing:-0.106px">6/19/2019</div>
<div class="cell" style="left:614px;width:146px;letter-spacing:-0.299px">John Doe</div>
<div class="cell" style="left:761px;width:139px;letter-spacing:-0.053px">+00 123 456 987</div>
<div class="cell r" style="left:901px;width:101px">17,009.92 €</div>
<div class="cell r" style="left:1003px;width:103px">17,009.92 €</div>
<div class="cell r" style="left:1107px;width:96px">0.00 €</div>
<div class="cell r" style="left:1204px;width:108px">17,009.92 €</div>
<div class="cb" style="left:1319px"></div>
<div class="cb" style="left:1351px"></div>
</div>
<div class="row gry alt" style="top:212px">
<div class="cell" style="left:0px;width:192px;letter-spacing:-0.062px">Orderconfirmation</div>
<div class="cell" style="left:193px;width:164px;letter-spacing:-0.091px">O201906/0062</div>
<div class="cell" style="left:358px;width:101px;letter-spacing:-0.106px">6/19/2019</div>
<div class="cell" style="left:614px;width:146px;letter-spacing:-0.299px">John Doe</div>
<div class="cell" style="left:761px;width:139px;letter-spacing:-0.053px">+00 123 456 987</div>
<div class="cell r" style="left:901px;width:101px">15,036.22 €</div>
<div class="cell r" style="left:1003px;width:103px">15,036.22 €</div>
<div class="cell r" style="left:1107px;width:96px">0.00 €</div>
<div class="cell r" style="left:1204px;width:108px">15,036.22 €</div>
<div class="cb" style="left:1319px"></div>
<div class="cb" style="left:1351px"></div>
<svg style="left:1354px;top:6px" width="9" height="8" viewBox="0 0 9 8" fill="none" stroke="#777" stroke-width="1.2"><path d="M0.8 4.2L3.3 6.8L8.2 0.8"/></svg>
</div>
<div class="row blk" style="top:233px">
<div class="cell" style="left:0px;width:192px;letter-spacing:-0.062px">Orderconfirmation</div>
<div class="cell" style="left:193px;width:164px;letter-spacing:-0.091px">O201906/0059</div>
<div class="cell" style="left:358px;width:101px;letter-spacing:-0.106px">6/19/2019</div>
<div class="cell" style="left:614px;width:146px;letter-spacing:-0.299px">John Doe</div>
<div class="cell" style="left:761px;width:139px;letter-spacing:-0.053px">+00 123 456 987</div>
<div class="cell r" style="left:901px;width:101px">15,913.47 €</div>
<div class="cell r" style="left:1003px;width:103px">15,913.47 €</div>
<div class="cell r" style="left:1107px;width:96px">0.00 €</div>
<div class="cell r" style="left:1204px;width:108px">15,913.47 €</div>
<div class="cb" style="left:1319px"></div>
<div class="cb" style="left:1351px"></div>
</div>
<div class="row gry alt" style="top:254px">
<div class="cell" style="left:0px;width:192px;letter-spacing:-0.062px">Orderconfirmation</div>
<div class="cell" style="left:193px;width:164px;letter-spacing:-0.091px">O201906/0064</div>
<div class="cell" style="left:358px;width:101px;letter-spacing:-0.106px">6/19/2019</div>
<div class="cell" style="left:614px;width:146px;letter-spacing:-0.299px">John Doe</div>
<div class="cell" style="left:761px;width:139px;letter-spacing:-0.053px">+00 123 456 987</div>
<div class="cell r" style="left:901px;width:101px">7,709.75 €</div>
<div class="cell r" style="left:1003px;width:103px">7,709.75 €</div>
<div class="cell r" style="left:1107px;width:96px">0.00 €</div>
<div class="cell r" style="left:1204px;width:108px">7,709.75 €</div>
<div class="cb" style="left:1319px"></div>
<div class="cb" style="left:1351px"></div>
<svg style="left:1354px;top:6px" width="9" height="8" viewBox="0 0 9 8" fill="none" stroke="#777" stroke-width="1.2"><path d="M0.8 4.2L3.3 6.8L8.2 0.8"/></svg>
</div>
<div class="row blk" style="top:275px">
<div class="cell" style="left:0px;width:192px;letter-spacing:-0.062px">Orderconfirmation</div>
<div class="cell" style="left:193px;width:164px;letter-spacing:-0.091px">O201906/0063</div>
<div class="cell" style="left:358px;width:101px;letter-spacing:-0.106px">6/19/2019</div>
<div class="cell" style="left:614px;width:146px;letter-spacing:-0.299px">John Doe</div>
<div class="cell" style="left:761px;width:139px;letter-spacing:-0.053px">+00 123 456 987</div>
<div class="cell r" style="left:901px;width:101px">4,405.56 €</div>
<div class="cell r" style="left:1003px;width:103px">4,405.56 €</div>
<div class="cell r" style="left:1107px;width:96px">0.00 €</div>
<div class="cell r" style="left:1204px;width:108px">4,405.56 €</div>
<div class="cb" style="left:1319px"></div>
<div class="cb" style="left:1351px"></div>
</div>
<div class="row blk alt" style="top:296px">
<div class="cell" style="left:0px;width:192px;letter-spacing:-0.062px">Orderconfirmation</div>
<div class="cell" style="left:193px;width:164px;letter-spacing:-0.091px">O201906/0058</div>
<div class="cell" style="left:358px;width:101px;letter-spacing:-0.106px">6/19/2019</div>
<div class="cell" style="left:614px;width:146px;letter-spacing:-0.299px">John Doe</div>
<div class="cell" style="left:761px;width:139px;letter-spacing:-0.053px">+00 123 456 987</div>
<div class="cell r" style="left:901px;width:101px">6,379.26 €</div>
<div class="cell r" style="left:1003px;width:103px">6,379.26 €</div>
<div class="cell r" style="left:1107px;width:96px">0.00 €</div>
<div class="cell r" style="left:1204px;width:108px">6,379.26 €</div>
<div class="cb" style="left:1319px"></div>
<div class="cb" style="left:1351px"></div>
</div>
<div class="row blk" style="top:317px">
<div class="cell" style="left:0px;width:192px;letter-spacing:-0.062px">Orderconfirmation</div>
<div class="cell" style="left:193px;width:164px;letter-spacing:-0.091px">O201906/0065</div>
<div class="cell" style="left:358px;width:101px;letter-spacing:-0.106px">6/19/2019</div>
<div class="cell" style="left:614px;width:146px;letter-spacing:-0.299px">John Doe</div>
<div class="cell" style="left:761px;width:139px;letter-spacing:-0.053px">+00 123 456 987</div>
<div class="cell r" style="left:901px;width:101px">8,811.15 €</div>
<div class="cell r" style="left:1003px;width:103px">8,811.15 €</div>
<div class="cell r" style="left:1107px;width:96px">0.00 €</div>
<div class="cell r" style="left:1204px;width:108px">8,811.15 €</div>
<div class="cb" style="left:1319px"></div>
<div class="cb" style="left:1351px"></div>
</div>
<div class="row blk alt" style="top:338px">
<div class="cell" style="left:0px;width:192px;letter-spacing:-0.062px">Orderconfirmation</div>
<div class="cell" style="left:193px;width:164px;letter-spacing:-0.091px">O201906/0057</div>
<div class="cell" style="left:358px;width:101px;letter-spacing:-0.106px">6/14/2019</div>
<div class="cell" style="left:460px;width:153px;letter-spacing:-0.12px">Commission</div>
<div class="cell" style="left:614px;width:146px;letter-spacing:-0.299px">John Doe</div>
<div class="cell" style="left:761px;width:139px;letter-spacing:-0.053px">+00 123 456 987</div>
<div class="cell r" style="left:901px;width:101px">63.55 €</div>
<div class="cell r" style="left:1003px;width:103px">63.55 €</div>
<div class="cell r" style="left:1107px;width:96px">0.00 €</div>
<div class="cell r" style="left:1204px;width:108px">63.55 €</div>
<div class="cb" style="left:1319px"></div>
<div class="cb" style="left:1351px"></div>
</div>
<div class="row gry" style="top:359px">
<div class="cell" style="left:0px;width:192px;letter-spacing:-0.062px">Orderconfirmation</div>
<div class="cell" style="left:193px;width:164px;letter-spacing:-0.091px">O201906/0056</div>
<div class="cell" style="left:358px;width:101px;letter-spacing:-0.106px">6/13/2019</div>
<div class="cell" style="left:614px;width:146px;letter-spacing:-0.299px">John Doe</div>
<div class="cell" style="left:761px;width:139px;letter-spacing:-0.053px">+00 123 456 987</div>
<div class="cell r" style="left:901px;width:101px">9,616.97 €</div>
<div class="cell r" style="left:1003px;width:103px">9,616.97 €</div>
<div class="cell r" style="left:1107px;width:96px">0.00 €</div>
<div class="cell r" style="left:1204px;width:108px">9,616.97 €</div>
<div class="cb" style="left:1319px"></div>
<div class="cb" style="left:1351px"></div>
<svg style="left:1354px;top:6px" width="9" height="8" viewBox="0 0 9 8" fill="none" stroke="#777" stroke-width="1.2"><path d="M0.8 4.2L3.3 6.8L8.2 0.8"/></svg>
</div>
<div class="row red alt" style="top:380px">
<div class="cell" style="left:0px;width:192px;letter-spacing:-0.094px">Invoice</div>
<div class="cell" style="left:193px;width:164px;letter-spacing:-0.034px">IV201912/0014</div>
<div class="cell" style="left:358px;width:101px;letter-spacing:-0.106px">5/13/2019</div>
<div class="cell" style="left:460px;width:153px;letter-spacing:-0.35px">A45Z489</div>
<div class="cell" style="left:614px;width:146px;letter-spacing:-0.182px">Matt Model</div>
<div class="cell" style="left:761px;width:139px;letter-spacing:-0.096px">+49 341 226210</div>
<div class="cell r" style="left:901px;width:101px">8,649.16 €</div>
<div class="cell r" style="left:1003px;width:103px">8,649.16 €</div>
<div class="cell r" style="left:1107px;width:96px">0.00 €</div>
<div class="cell r" style="left:1204px;width:108px">8,649.16 €</div>
<div class="cb" style="left:1319px"></div>
<div class="cb" style="left:1351px"></div>
</div>
<div class="row blk" style="top:401px">
<div class="cell" style="left:0px;width:192px;letter-spacing:-0.062px">Orderconfirmation</div>
<div class="cell" style="left:193px;width:164px;letter-spacing:-0.091px">O201902/0055</div>
<div class="cell" style="left:358px;width:101px;letter-spacing:-0.106px">2/25/2019</div>
<div class="cell" style="left:460px;width:153px;letter-spacing:-0.12px">Demo PPS 2</div>
<div class="cell" style="left:614px;width:146px;letter-spacing:-0.299px">John Doe</div>
<div class="cell" style="left:761px;width:139px;letter-spacing:-0.053px">+00 123 456 987</div>
<div class="cell r" style="left:901px;width:101px">11,397.74 €</div>
<div class="cell r" style="left:1003px;width:103px">11,397.74 €</div>
<div class="cell r" style="left:1107px;width:96px">0.00 €</div>
<div class="cell r" style="left:1204px;width:108px">11,397.74 €</div>
<div class="cb" style="left:1319px"></div>
<div class="cb" style="left:1351px"></div>
</div>
<div class="row blk alt" style="top:422px">
<div class="cell" style="left:0px;width:192px;letter-spacing:-0.062px">Orderconfirmation</div>
<div class="cell" style="left:193px;width:164px;letter-spacing:-0.091px">O201902/0054</div>
<div class="cell" style="left:358px;width:101px;letter-spacing:-0.106px">2/25/2019</div>
<div class="cell" style="left:460px;width:153px;letter-spacing:-0.12px">Demo PPS 1</div>
<div class="cell" style="left:614px;width:146px;letter-spacing:-0.299px">John Doe</div>
<div class="cell" style="left:761px;width:139px;letter-spacing:-0.053px">+00 123 456 987</div>
<div class="cell r" style="left:901px;width:101px">13,931.12 €</div>
<div class="cell r" style="left:1003px;width:103px">13,931.12 €</div>
<div class="cell r" style="left:1107px;width:96px">0.00 €</div>
<div class="cell r" style="left:1204px;width:108px">13,931.12 €</div>
<div class="cb" style="left:1319px"></div>
<div class="cb" style="left:1351px"></div>
</div>
<div class="row red" style="top:443px">
<div class="cell" style="left:0px;width:192px;letter-spacing:-0.094px">Invoice</div>
<div class="cell" style="left:193px;width:164px;letter-spacing:-0.034px">IV201902/0008</div>
<div class="cell" style="left:358px;width:101px;letter-spacing:-0.106px">2/21/2019</div>
<div class="cell" style="left:460px;width:153px;letter-spacing:-0.12px">RollShutter</div>
<div class="cell" style="left:614px;width:146px;letter-spacing:-0.299px">John Doe</div>
<div class="cell" style="left:761px;width:139px;letter-spacing:-0.053px">+00 123 456 987</div>
<div class="cell r" style="left:901px;width:101px">2,757.03 €</div>
<div class="cell r" style="left:1003px;width:103px">2,757.03 €</div>
<div class="cell r" style="left:1107px;width:96px">0.00 €</div>
<div class="cell r" style="left:1204px;width:108px">2,757.03 €</div>
<div class="cb" style="left:1319px"></div>
<div class="cb" style="left:1351px"></div>
</div>
<div class="row grn alt" style="top:464px">
<div class="cell" style="left:0px;width:192px;letter-spacing:-0.094px">Invoice</div>
<div class="cell" style="left:193px;width:164px;letter-spacing:-0.034px">IV201902/0009</div>
<div class="cell" style="left:358px;width:101px;letter-spacing:-0.106px">2/21/2019</div>
<div class="cell" style="left:460px;width:153px;letter-spacing:-0.12px">RollShutter</div>
<div class="cell" style="left:614px;width:146px;letter-spacing:-0.299px">John Doe</div>
<div class="cell" style="left:761px;width:139px;letter-spacing:-0.053px">+00 123 456 987</div>
<div class="cell r" style="left:901px;width:101px">269.11 €</div>
<div class="cell r" style="left:1003px;width:103px">269.11 €</div>
<div class="cell r" style="left:1107px;width:96px">269.11 €</div>
<div class="cell r" style="left:1204px;width:108px">0.00 €</div>
<div class="cb" style="left:1319px"></div>
<svg style="left:1322px;top:6px" width="9" height="8" viewBox="0 0 9 8" fill="none" stroke="#777" stroke-width="1.2"><path d="M0.8 4.2L3.3 6.8L8.2 0.8"/></svg>
<div class="cb" style="left:1351px"></div>
</div>
<div class="row blk" style="top:485px">
<div class="cell" style="left:0px;width:192px;letter-spacing:-0.062px">Orderconfirmation</div>
<div class="cell" style="left:193px;width:164px;letter-spacing:-0.091px">O201812/0049</div>
<div class="cell" style="left:358px;width:101px;letter-spacing:-0.106px">12/10/2018</div>
<div class="cell" style="left:460px;width:153px;letter-spacing:-0.12px">Demo</div>
<div class="cell" style="left:614px;width:146px;letter-spacing:-0.299px">John Doe</div>
<div class="cell" style="left:761px;width:139px;letter-spacing:-0.053px">+00 123 456 987</div>
<div class="cell r" style="left:901px;width:101px">450.00 €</div>
<div class="cell r" style="left:1003px;width:103px">535.50 €</div>
<div class="cell r" style="left:1107px;width:96px">0.00 €</div>
<div class="cell r" style="left:1204px;width:108px">535.50 €</div>
<div class="cb" style="left:1319px"></div>
<div class="cb" style="left:1351px"></div>
</div>
<div class="vl" style="left:0px;top:0px;height:648px"></div>
<div class="vl" style="left:193px;top:23px;height:483px"></div>
<div class="vl" style="left:358px;top:23px;height:483px"></div>
<div class="vl" style="left:460px;top:23px;height:483px"></div>
<div class="vl" style="left:614px;top:23px;height:483px"></div>
<div class="vl" style="left:761px;top:23px;height:483px"></div>
<div class="vl" style="left:901px;top:23px;height:483px"></div>
<div class="vl" style="left:1003px;top:23px;height:483px"></div>
<div class="vl" style="left:1107px;top:23px;height:483px"></div>
<div class="vl" style="left:1204px;top:23px;height:483px"></div>
<div class="vl" style="left:1313px;top:23px;height:483px"></div>
<div class="vl" style="left:1340px;top:23px;height:483px"></div>
<div class="abs" style="left:1377px;top:23px;width:17px;height:625px;background:#f0f0f0"></div>
<div class="abs" style="left:1378px;top:24px;width:15px;height:16px;background:#fff;border:1px solid #e3e3e3"></div>
<svg style="left:1382px;top:29px" width="7" height="4" viewBox="0 0 7 4"><path d="M0 4h7L3.5 0z" fill="#cfcfcf"/></svg>
<div class="abs" style="left:1378px;top:630px;width:15px;height:17px;background:#fff;border:1px solid #e3e3e3"></div>
<svg style="left:1382px;top:637px" width="7" height="4" viewBox="0 0 7 4"><path d="M0 0h7L3.5 4z" fill="#cfcfcf"/></svg>
</div>
<div class="abs" style="left:1597px;top:153px;width:1px;height:718px;background:#c6c6c6"></div>
<div class="abs" style="left:204px;top:801px;width:1393px;height:1px;background:#c6c6c6"></div>
<div class="abs" style="left:204px;top:802px;width:1392px;height:36px;background:#fff"></div>
<div class="sum" style="left:1106px;width:100px;top:808px">207,498.23 €</div>
<div class="sum" style="left:1208px;width:102px;top:808px">207,583.73 €</div>
<div class="sum" style="left:1409px;width:107px;top:808px">207,314.62 €</div>
<div class="abs" style="left:204px;top:838px;width:1393px;height:1px;background:#c6c6c6"></div>
<div class="abs" style="left:204px;top:839px;width:1393px;height:32px;background:#f0f0f0"></div>
<div class="abs" style="left:211px;top:848px;width:14px;height:14px;border:1px solid #ABABAB;background:#fff"></div>
<svg style="left:214px;top:851px" width="9" height="8" viewBox="0 0 9 8" fill="none" stroke="#8a8a8a" stroke-width="1.2"><path d="M0.8 4.2L3.3 6.8L8.2 0.8"/></svg>
<div class="t" style="left:1541px;top:850px;color:#222;letter-spacing:-0.12px">Edit Filter</div>
<div class="abs" style="left:0;top:872px;width:1600px;height:28px;background:#f7f7f7"></div><div class="abs" style="left:203px;top:802px;width:1px;height:69px;background:#c6c6c6"></div>
<div class="abs" style="left:116px;top:871px;width:1484px;height:1px;background:#c6c6c6"></div>
<div class="abs" style="left:3px;top:872px;width:113px;height:25px;background:#f7f7f7;border:1px solid #c6c6c6;border-top:none;border-bottom:2px solid #b5b5b5"></div>
<div class="t" style="left:13px;top:878px;color:#222">Projects [23 / 312]</div>
<svg style="left:1585px;top:883px" width="6" height="3" viewBox="0 0 6 3"><path d="M0 0h6L3 3z" fill="#555"/></svg>
<div class="abs" style="left:672px;top:360px;width:256px;height:172px;background:#f0f0f0;border:1px solid #9c9c9c;box-shadow:0 2px 10px rgba(0,0,0,.35),0 0 3px rgba(0,0,0,.2)"></div>
<div class="abs" style="left:673px;top:361px;width:254px;height:30px;background:#fff"></div>
<div class="t" style="left:681px;top:370px;color:#a0a0a0;font-size:12px;letter-spacing:-0.3px">Excel Export</div>
<div class="abs" style="left:685px;top:398px;width:230px;height:92px;border:1px solid #dcdcdc"></div>
<!-- radio 1 -->
<div class="abs" style="left:693px;top:414px;width:13px;height:13px;border:1.3px solid #333;border-radius:50%;background:#fff"></div>
<div class="abs" style="left:696px;top:417px;width:7px;height:7px;border-radius:50%;background:#333"></div>
<div class="abs" style="left:709px;top:414px;width:53px;height:15px;border:1px dotted #111"></div>
<div class="t" style="left:712px;top:415px;color:#000;letter-spacing:-0.28px">All shown</div>
<div class="t" style="left:858px;top:415px;color:#000">[23]</div>
<!-- radio 2 -->
<div class="abs" style="left:693px;top:437px;width:13px;height:13px;border:1.3px solid #333;border-radius:50%;background:#fff"></div>
<div class="t" style="left:712px;top:438px;color:#000;letter-spacing:-0.28px">All selected</div>
<div class="t" style="left:858px;top:438px;color:#000">[1]</div>
<!-- checkbox -->
<div class="abs" style="left:691px;top:463px;width:13px;height:13px;border:1px solid #333;background:#fff"></div>
<svg style="left:693px;top:465px" width="9" height="9" viewBox="0 0 9 9" fill="none" stroke="#111" stroke-width="1.2"><path d="M0.8 4.6L3.3 7.2L8.2 1.2"/></svg>
<div class="t" style="left:710px;top:463px;color:#000;letter-spacing:-0.28px">Open exported file</div>
<!-- buttons -->
<div class="abs c" style="left:686px;top:498px;width:108px;height:21px;background:#e1e1e1;border:1px solid #adadad;line-height:19px;color:#000">OK</div>
<div class="abs c" style="left:806px;top:498px;width:108px;height:21px;background:#e1e1e1;border:1px solid #adadad;line-height:19px;color:#000;letter-spacing:-0.2px">Cancel</div>

</body></html>
